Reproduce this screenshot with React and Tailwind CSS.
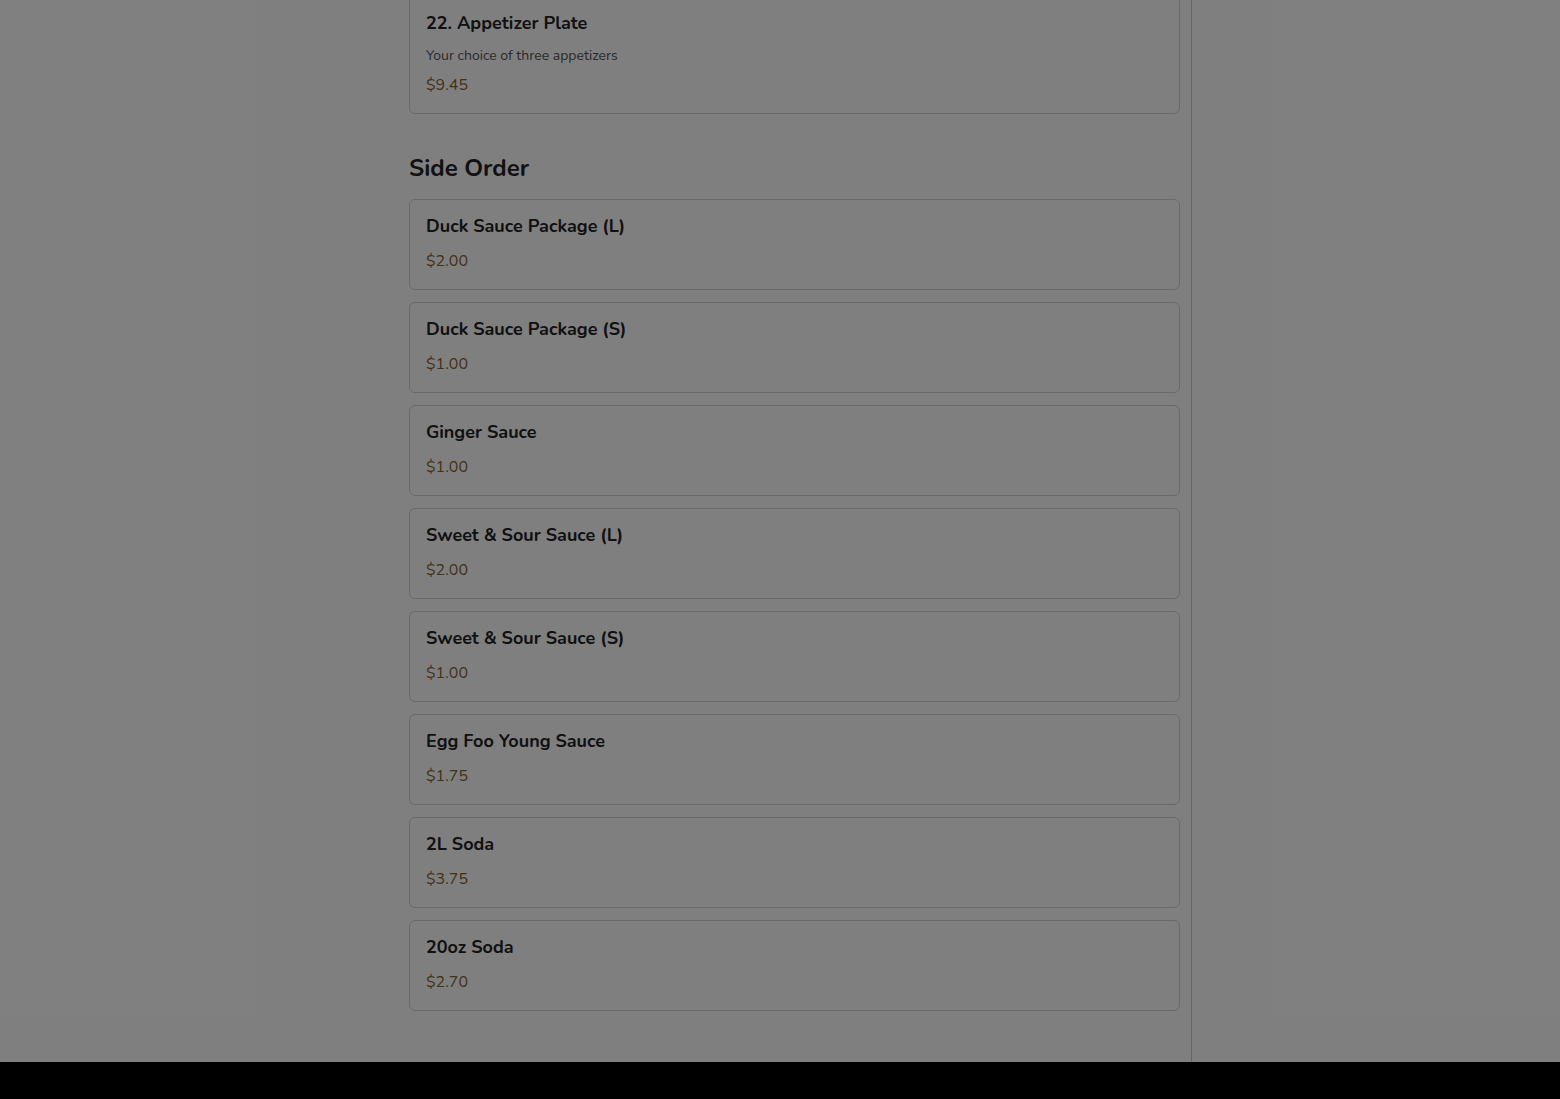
const sides = [
  { name: "Duck Sauce Package (L)", price: "$2.00" },
  { name: "Duck Sauce Package (S)", price: "$1.00" },
  { name: "Ginger Sauce", price: "$1.00" },
  { name: "Sweet & Sour Sauce (L)", price: "$2.00" },
  { name: "Sweet & Sour Sauce (S)", price: "$1.00" },
  { name: "Egg Foo Young Sauce", price: "$1.75" },
  { name: "2L Soda", price: "$3.75" },
  { name: "20oz Soda", price: "$2.70" },
];

function MenuCard({ name, desc, price }) {
  return (
    <div className="border border-[#d4d4d4] rounded-md bg-white px-4 pt-4 pb-4">
      <h3 className="text-lg leading-5 font-bold text-[#222]">{name}</h3>
      {desc && (
        <p className="mt-[13px] text-sm leading-5 text-[#555]">{desc}</p>
      )}
      <p className={`${desc ? "mt-[7px]" : "mt-[13px]"} text-base leading-6 text-[#86652f]`}>
        {price}
      </p>
    </div>
  );
}

export default function App() {
  return (
    <div
      className="relative w-full h-[1099px] overflow-hidden bg-white"
      style={{ fontFamily: '"Nunito", "Open Sans", sans-serif' }}
    >
      <div className="flex h-[1062px]">
        <main className="w-[1192px] pl-[409px] border-r border-[#cccccc]">
          <div className="w-[771px] -mt-[4px]">
            <MenuCard
              name="22. Appetizer Plate"
              desc="Your choice of three appetizers"
              price="$9.45"
            />

            <h2 className="mt-[38px] mb-[15px] text-2xl leading-8 font-bold text-[#222]">
              Side Order
            </h2>
            <div className="flex flex-col gap-3">
              {sides.map((s) => (
                <MenuCard key={s.name} name={s.name} price={s.price} />
              ))}
            </div>
          </div>
        </main>
        <aside className="flex-1" />
      </div>
      <footer className="h-[37px] bg-black" />

      <div className="absolute inset-0 bg-black/50" />
    </div>
  );
}
